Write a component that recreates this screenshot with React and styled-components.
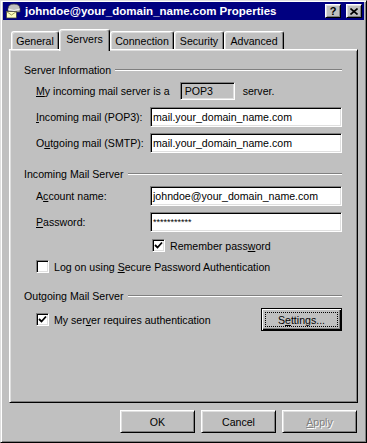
import React from "react";
import styled, { createGlobalStyle } from "styled-components";

const Global = createGlobalStyle`
  html, body {
    margin: 0;
    padding: 0;
    background: #c0c0c0;
  }
  body {
    font-family: "Liberation Sans", Arial, sans-serif;
    font-size: 10.6px;
    color: #000;
  }
`;

const Window = styled.div`
  box-sizing: border-box;
  width: 367px;
  height: 443px;
  display: flex;
  flex-direction: column;
  background: #c0c0c0;
  border: 1px solid;
  border-color: #dfdfdf #000 #000 #dfdfdf;
  box-shadow: inset 1px 1px #fff, inset -1px -1px #808080;
  padding: 1px 2px 2px 2px;
`;

const TitleBar = styled.div`
  height: 18px;
  flex: none;
  display: flex;
  align-items: center;
  gap: 3px;
  padding: 0 2px 0 2px;
  background: #000080;
  color: #fff;
`;

const TitleText = styled.div`
  flex: 1;
  font-weight: bold;
  font-size: 11.5px;
  white-space: nowrap;
  padding-left: 1px;
`;

const CaptionButton = styled.div`
  box-sizing: border-box;
  width: 16px;
  height: 14px;
  margin-left: ${({ $gap }) => $gap || 0}px;
  display: flex;
  align-items: center;
  justify-content: center;
  background: #c0c0c0;
  color: #000;
  font-weight: bold;
  font-size: 11px;
  border: 1px solid;
  border-color: #fff #000 #000 #fff;
  box-shadow: inset 1px 1px #dfdfdf, inset -1px -1px #808080;
`;

const Body = styled.div`
  flex: 1;
  display: flex;
  flex-direction: column;
  padding: 0 6px 7px 6px;
`;

const TabStrip = styled.div`
  height: 29px;
  flex: none;
  display: flex;
  align-items: flex-end;
  padding-left: 2px;
`;

const Tab = styled.div`
  box-sizing: border-box;
  position: relative;
  z-index: ${({ $active }) => ($active ? 2 : 0)};
  width: ${({ $w }) => $w}px;
  height: ${({ $active }) => ($active ? 22 : 18)}px;
  margin-bottom: ${({ $active }) => ($active ? -2 : 0)}px;
  padding-bottom: ${({ $active }) => ($active ? 3 : 0)}px;
  display: flex;
  align-items: center;
  justify-content: center;
  background: #c0c0c0;
  border: 1px solid;
  border-bottom: none;
  border-color: #fff #000 #000 #fff;
  border-radius: 3px 3px 0 0;
  box-shadow: inset -1px 0 #808080, inset 1px 1px #dfdfdf;
  white-space: nowrap;
`;

const Panel = styled.div`
  flex: 1;
  box-sizing: border-box;
  position: relative;
  z-index: 1;
  display: flex;
  flex-direction: column;
  padding: 13px 15px 0 14px;
  border: 1px solid;
  border-color: #fff #000 #000 #fff;
  box-shadow: inset 1px 1px #dfdfdf, inset -1px -1px #808080;
`;

const Legend = styled.div`
  height: 13px;
  margin-top: ${({ $mt }) => $mt || 0}px;
  display: flex;
  align-items: center;
  white-space: nowrap;
`;

const LegendLine = styled.div`
  flex: 1;
  height: 0;
  margin-left: 4px;
  border-top: 1px solid #808080;
  border-bottom: 1px solid #fff;
`;

const Row = styled.div`
  height: ${({ $h }) => $h || 20}px;
  margin-top: ${({ $mt }) => $mt}px;
  margin-left: 12px;
  padding-left: ${({ $indent }) => $indent || 0}px;
  display: flex;
  align-items: center;
  white-space: nowrap;
`;

const Label = styled.div`
  width: 114px;
  flex: none;
`;

const Field = styled.div`
  box-sizing: border-box;
  flex: 1;
  height: 20px;
  display: flex;
  align-items: center;
  padding-left: 2px;
  background: #fff;
  border: 1px solid;
  border-color: #808080 #fff #fff #808080;
  box-shadow: inset 1px 1px #000, inset -1px -1px #dfdfdf;
  font-size: ${({ $small }) => ($small ? 9 : 10.6)}px;
  overflow: hidden;
`;

const ReadField = styled.div`
  box-sizing: border-box;
  width: 55px;
  height: 18px;
  margin: 0 8px 0 10px;
  display: flex;
  align-items: center;
  padding-left: 4px;
  border: 1px solid;
  border-color: #808080 #fff #fff #808080;
  box-shadow: inset 1px 1px #000, inset -1px -1px #dfdfdf;
`;

const Box = styled.div`
  box-sizing: border-box;
  width: 13px;
  height: 13px;
  flex: none;
  margin-right: 5px;
  display: flex;
  align-items: center;
  justify-content: center;
  background: #fff;
  border: 1px solid;
  border-color: #808080 #fff #fff #808080;
  box-shadow: inset 1px 1px #000, inset -1px -1px #dfdfdf;
`;

const Spacer = styled.div`
  flex: 1;
`;

const Button = styled.button`
  box-sizing: border-box;
  width: ${({ $w }) => $w || 75}px;
  height: 23px;
  padding: 3px;
  margin: 0;
  font-family: inherit;
  font-size: inherit;
  color: ${({ disabled }) => (disabled ? "#808080" : "#000")};
  text-shadow: ${({ disabled }) => (disabled ? "1px 1px #fff" : "none")};
  background: #c0c0c0;
  border: 1px solid;
  border-color: ${({ $default }) =>
    $default ? "#000" : "#fff #000 #000 #fff"};
  box-shadow: ${({ $default }) =>
    $default
      ? "inset 1px 1px #fff, inset -1px -1px #000, inset -2px -2px #808080"
      : "inset 1px 1px #dfdfdf, inset -1px -1px #808080"};
`;

const Focus = styled.span`
  box-sizing: border-box;
  display: flex;
  align-items: center;
  justify-content: center;
  height: 100%;
  border: 1px dotted ${({ $on }) => ($on ? "#000" : "transparent")};
`;

const Footer = styled.div`
  flex: none;
  display: flex;
  justify-content: flex-end;
  gap: 6px;
  padding: 7px 1px 0 0;
`;

const U = styled.span`
  text-decoration: underline;
  text-underline-offset: 1px;
`;

const MailIcon = () => (
  <svg width="16" height="16" viewBox="0 0 16 16">
    <path d="M3 6 Q3 1 9 1 Q15 1 15 6 L15 9 L3 9 Z" fill="#c0c0c0" stroke="#404040" strokeWidth="0.8" />
    <path d="M3 6 Q9 9 15 6" fill="none" stroke="#fff" strokeWidth="0.8" />
    <rect x="1.5" y="8.5" width="10" height="6.5" fill="#ffffc0" stroke="#404040" strokeWidth="0.8" />
    <path d="M1.5 8.5 L6.5 12 L11.5 8.5" fill="none" stroke="#808040" strokeWidth="0.8" />
  </svg>
);

const Check = () => (
  <svg width="9" height="9" viewBox="0 0 9 9">
    <path d="M1 4 L3.5 6.5 L8 1.5" fill="none" stroke="#000" strokeWidth="1.8" />
  </svg>
);

const CloseGlyph = () => (
  <svg width="8" height="7" viewBox="0 0 8 7">
    <path d="M0.5 0.5 L7.5 6.5 M7.5 0.5 L0.5 6.5" stroke="#000" strokeWidth="1.6" />
  </svg>
);

const tabs = [
  { name: "General", w: 48 },
  { name: "Servers", w: 51, active: true },
  { name: "Connection", w: 64 },
  { name: "Security", w: 50 },
  { name: "Advanced", w: 60 },
];

const CheckRow = ({ checked, children, ...rest }) => (
  <Row $h={13} {...rest}>
    <Box>{checked && <Check />}</Box>
    <span>{children}</span>
  </Row>
);

export default function App() {
  return (
    <>
      <Global />
      <Window>
        <TitleBar>
          <MailIcon />
          <TitleText>johndoe@your_domain_name.com Properties</TitleText>
          <CaptionButton>?</CaptionButton>
          <CaptionButton $gap={2}>
            <CloseGlyph />
          </CaptionButton>
        </TitleBar>
        <Body>
          <TabStrip>
            {tabs.map((t) => (
              <Tab key={t.name} $w={t.w} $active={t.active}>
                {t.name}
              </Tab>
            ))}
          </TabStrip>
          <Panel>
            <Legend>
              Server Information
              <LegendLine />
            </Legend>
            <Row $mt={5}>
              <span>
                <U>M</U>y incoming mail server is a
              </span>
              <ReadField>POP3</ReadField>
              <span>server.</span>
            </Row>
            <Row $mt={6}>
              <Label>
                <U>I</U>ncoming mail (POP3):
              </Label>
              <Field>mail.your_domain_name.com</Field>
            </Row>
            <Row $mt={6}>
              <Label>
                O<U>u</U>tgoing mail (SMTP):
              </Label>
              <Field>mail.your_domain_name.com</Field>
            </Row>

            <Legend $mt={14}>
              Incoming Mail Server
              <LegendLine />
            </Legend>
            <Row $mt={6}>
              <Label>
                A<U>c</U>count name:
              </Label>
              <Field>johndoe@your_domain_name.com</Field>
            </Row>
            <Row $mt={6}>
              <Label>
                <U>P</U>assword:
              </Label>
              <Field $small>***********</Field>
            </Row>
            <CheckRow checked $mt={7} $indent={116}>
              Remember pass<U>w</U>ord
            </CheckRow>
            <CheckRow $mt={8}>
              Log on using <U>S</U>ecure Password Authentication
            </CheckRow>

            <Legend $mt={16}>
              Outgoing Mail Server
              <LegendLine />
            </Legend>
            <Row $h={23} $mt={6}>
              <Box>
                <Check />
              </Box>
              <span>
                My ser<U>v</U>er requires authentication
              </span>
              <Spacer />
              <Button $w={81} $default>
                <Focus $on>
                  <span>
                    S<U>e</U>ttings...
                  </span>
                </Focus>
              </Button>
            </Row>
          </Panel>
          <Footer>
            <Button>
              <Focus>OK</Focus>
            </Button>
            <Button>
              <Focus>Cancel</Focus>
            </Button>
            <Button disabled>
              <Focus>
                <span>
                  <U>A</U>pply
                </span>
              </Focus>
            </Button>
          </Footer>
        </Body>
      </Window>
    </>
  );
}
